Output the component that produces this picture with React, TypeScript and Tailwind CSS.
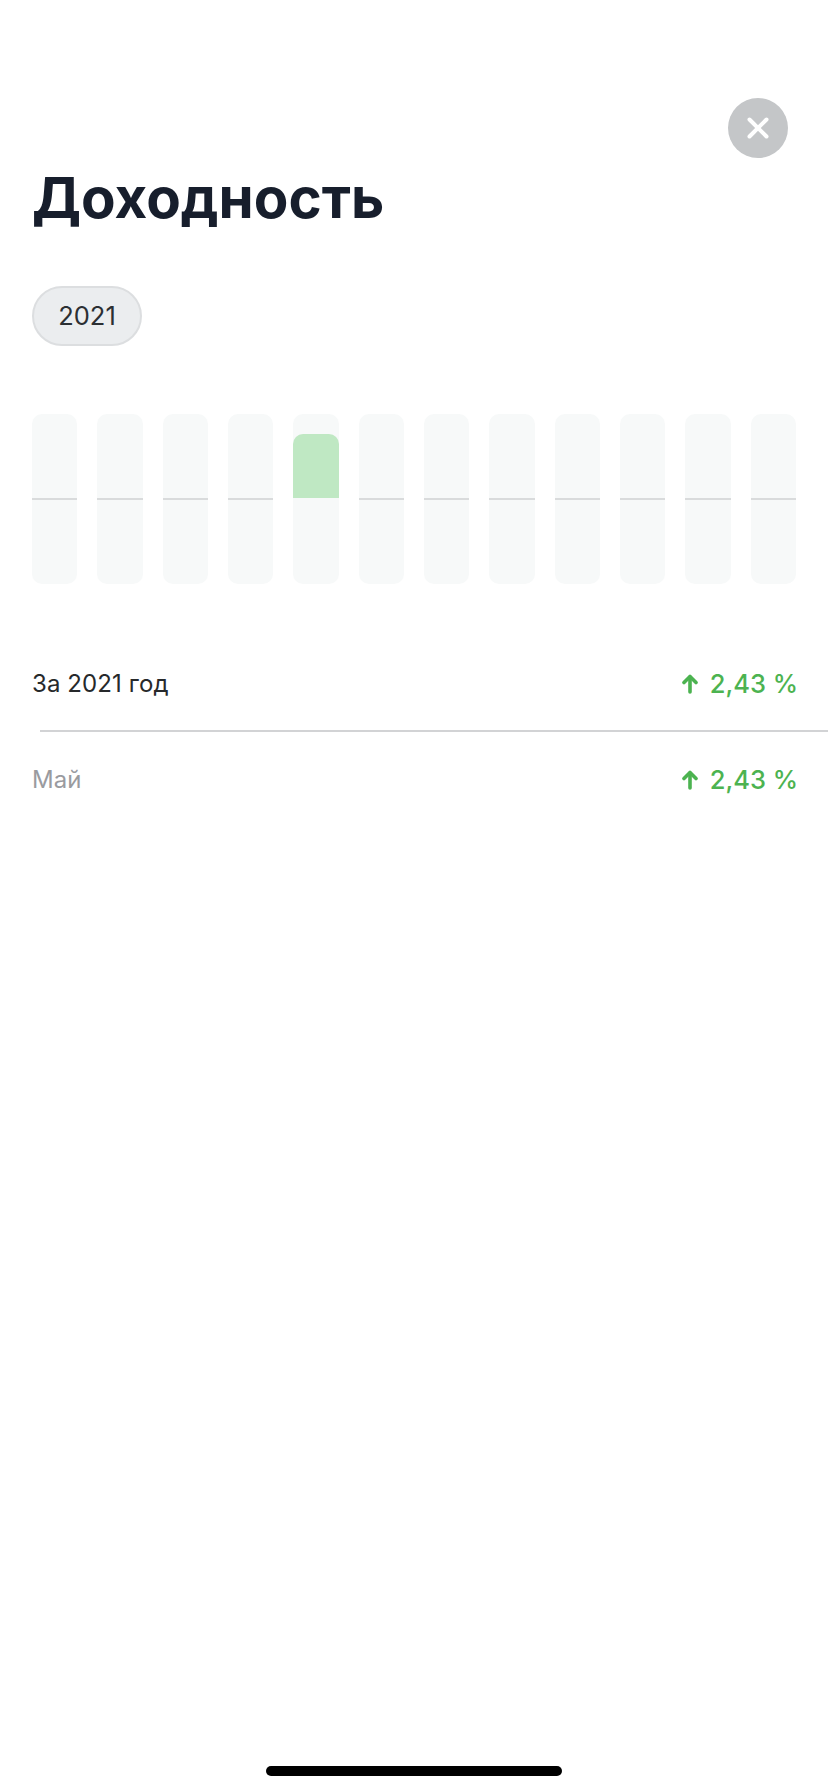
const months = [0, 1, 2, 3, 4, 5, 6, 7, 8, 9, 10, 11];

function ArrowUp() {
  return (
    <svg width="16" height="20" viewBox="0 0 16 20" fill="none" stroke="#4cb350" strokeWidth="3.6" strokeLinecap="round" strokeLinejoin="round">
      <path d="M8 18V3" />
      <path d="M2 8.5L8 2.5L14 8.5" />
    </svg>
  );
}

function Row({ label, labelClass }: { label: string; labelClass: string }) {
  return (
    <div className="flex items-center justify-between pl-8 pr-[30px]">
      <span className={`text-[24px] leading-[32px] tracking-[0.1px] ${labelClass}`}>{label}</span>
      <span className="flex items-center gap-[12px] text-[25.5px] leading-[32px] font-medium text-[#4cb350]">
        <ArrowUp />
        2,43 %
      </span>
    </div>
  );
}

export default function App() {
  return (
    <div className="h-[1792px] bg-white flex flex-col font-['Inter',sans-serif] overflow-hidden">
      <div className="flex justify-end pt-[98px] pr-[40px]">
        <button className="w-[60px] h-[60px] rounded-full bg-[#c4c6c8] flex items-center justify-center">
          <svg width="22" height="22" viewBox="0 0 22 22" fill="none" stroke="white" strokeWidth="4" strokeLinecap="round">
            <path d="M2.5 2.5L19.5 19.5" />
            <path d="M19.5 2.5L2.5 19.5" />
          </svg>
        </button>
      </div>

      <h1 className="pl-8 mt-[6px] text-[56.5px] leading-[68px] font-bold text-[#171e2c]">Доходность</h1>

      <div className="pl-8 mt-[54px]">
        <div className="w-[110px] h-[60px] rounded-full bg-[#ebedef] border-2 border-[#dcdee0] flex items-center justify-center text-[25.5px] text-[#2b2f33]">
          2021
        </div>
      </div>

      <div className="mx-8 mt-[68px] grid grid-cols-12 gap-x-5">
        {months.map((m) => (
          <div key={m} className="h-[170px] rounded-[10px] bg-[#f7f9f9] flex flex-col overflow-hidden">
            <div className="h-[84px] pt-5 flex flex-col justify-end">
              {m === 4 && <div className="h-16 rounded-t-[10px] bg-[#bfe8c3]" />}
            </div>
            {m !== 4 ? <div className="h-[2px] bg-[#d9dbdc]" /> : <div className="h-[2px]" />}
          </div>
        ))}
      </div>

      <div className="mt-[84px]">
        <Row label="За 2021 год" labelClass="text-[#26292b]" />
      </div>
      <div className="ml-10 mt-[30px] h-[2px] bg-[#d2d3d5]" />
      <div className="mt-[32px]">
        <Row label="Май" labelClass="text-[#9a9b9f]" />
      </div>

      <div className="mt-auto mb-4 self-center w-[296px] h-[10px] rounded-full bg-black" />
    </div>
  );
}
